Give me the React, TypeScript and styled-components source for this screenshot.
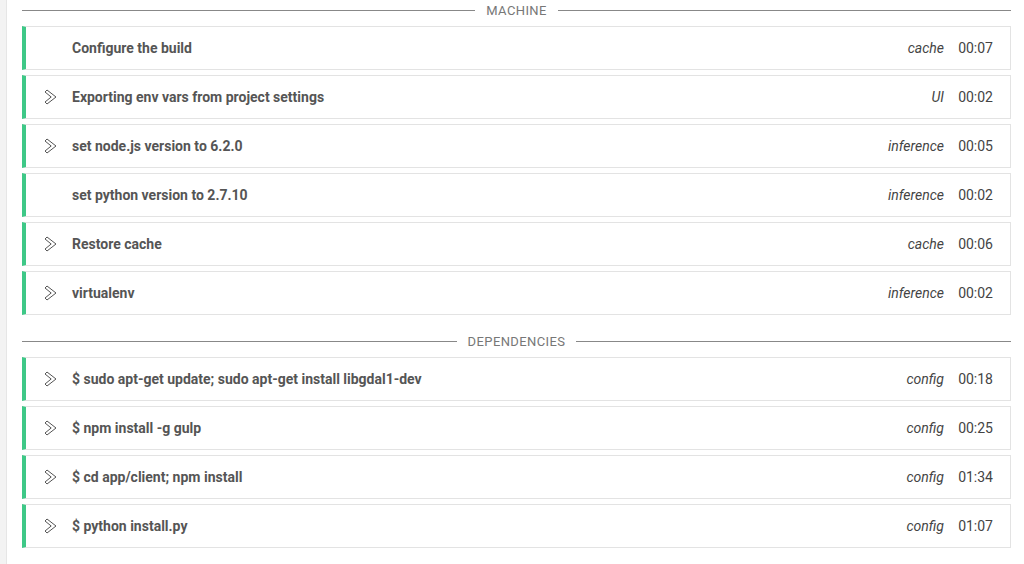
import React from 'react';
import styled, { createGlobalStyle } from 'styled-components';

const GlobalStyle = createGlobalStyle`
  html, body {
    margin: 0;
    padding: 0;
    background: #fff;
    font-family: Roboto, "Liberation Sans", sans-serif;
  }
`;

const Page = styled.div`
  display: flex;
  width: 1024px;
  height: 564px;
  overflow: hidden;
`;

const SideStrip = styled.div`
  width: 6px;
  flex: none;
  background: #f3f3f3;
  border-right: 1px solid #e6e6e6;
`;

const Content = styled.div`
  flex: 1;
  padding: 0 13px 0 15px;
  display: flex;
  flex-direction: column;
`;

const Section = styled.section<{ $top: number }>`
  display: flex;
  flex-direction: column;
  gap: 5px;
  padding-top: ${(p) => p.$top}px;
`;

const Divider = styled.div`
  display: flex;
  align-items: center;
  gap: 11px;
  height: 20px;
  margin-bottom: 1px;
  color: #777;
  font-size: 13px;
  letter-spacing: 0.4px;

  &::before,
  &::after {
    content: '';
    flex: 1;
    height: 1px;
    background: #888;
  }
`;

const Row = styled.div`
  display: flex;
  align-items: center;
  height: 42px;
  border: 1px solid #e3e3e3;
  border-left: 4px solid #3ec887;
  padding-right: 17px;
  color: #555;
  font-size: 14px;
`;

const ChevronSlot = styled.div`
  width: 46px;
  flex: none;
  display: flex;
  justify-content: flex-start;
  padding-left: 18px;
  box-sizing: border-box;
`;

const Title = styled.div`
  flex: 1;
  font-weight: 700;
  white-space: nowrap;
`;

const Source = styled.span`
  font-style: italic;
  color: #444;
`;

const Time = styled.span`
  width: 35px;
  margin-left: 14px;
  color: #444;
  text-align: right;
`;

const Chevron = () => (
  <svg width="14" height="16" viewBox="0 0 14 16">
    <polygon
      points="1,3 3,1 12,8 3,15 1,13 7.2,8"
      fill="none"
      stroke="#555"
      strokeWidth="1"
      strokeLinejoin="round"
    />
  </svg>
);

interface Step {
  title: string;
  source: string;
  time: string;
  expandable: boolean;
}

const machine: Step[] = [
  { title: 'Configure the build', source: 'cache', time: '00:07', expandable: false },
  { title: 'Exporting env vars from project settings', source: 'UI', time: '00:02', expandable: true },
  { title: 'set node.js version to 6.2.0', source: 'inference', time: '00:05', expandable: true },
  { title: 'set python version to 2.7.10', source: 'inference', time: '00:02', expandable: false },
  { title: 'Restore cache', source: 'cache', time: '00:06', expandable: true },
  { title: 'virtualenv', source: 'inference', time: '00:02', expandable: true },
];

const dependencies: Step[] = [
  { title: '$ sudo apt-get update; sudo apt-get install libgdal1-dev', source: 'config', time: '00:18', expandable: true },
  { title: '$ npm install -g gulp', source: 'config', time: '00:25', expandable: true },
  { title: '$ cd app/client; npm install', source: 'config', time: '01:34', expandable: true },
  { title: '$ python install.py', source: 'config', time: '01:07', expandable: true },
];

const StepRow: React.FC<{ step: Step }> = ({ step }) => (
  <Row>
    <ChevronSlot>{step.expandable && <Chevron />}</ChevronSlot>
    <Title>{step.title}</Title>
    <Source>{step.source}</Source>
    <Time>{step.time}</Time>
  </Row>
);

const App: React.FC = () => (
  <>
    <GlobalStyle />
    <Page>
      <SideStrip />
      <Content>
        <Section $top={0}>
          <Divider>MACHINE</Divider>
          {machine.map((s) => (
            <StepRow key={s.title} step={s} />
          ))}
        </Section>
        <Section $top={16}>
          <Divider>DEPENDENCIES</Divider>
          {dependencies.map((s) => (
            <StepRow key={s.title} step={s} />
          ))}
        </Section>
      </Content>
    </Page>
  </>
);

export default App;
